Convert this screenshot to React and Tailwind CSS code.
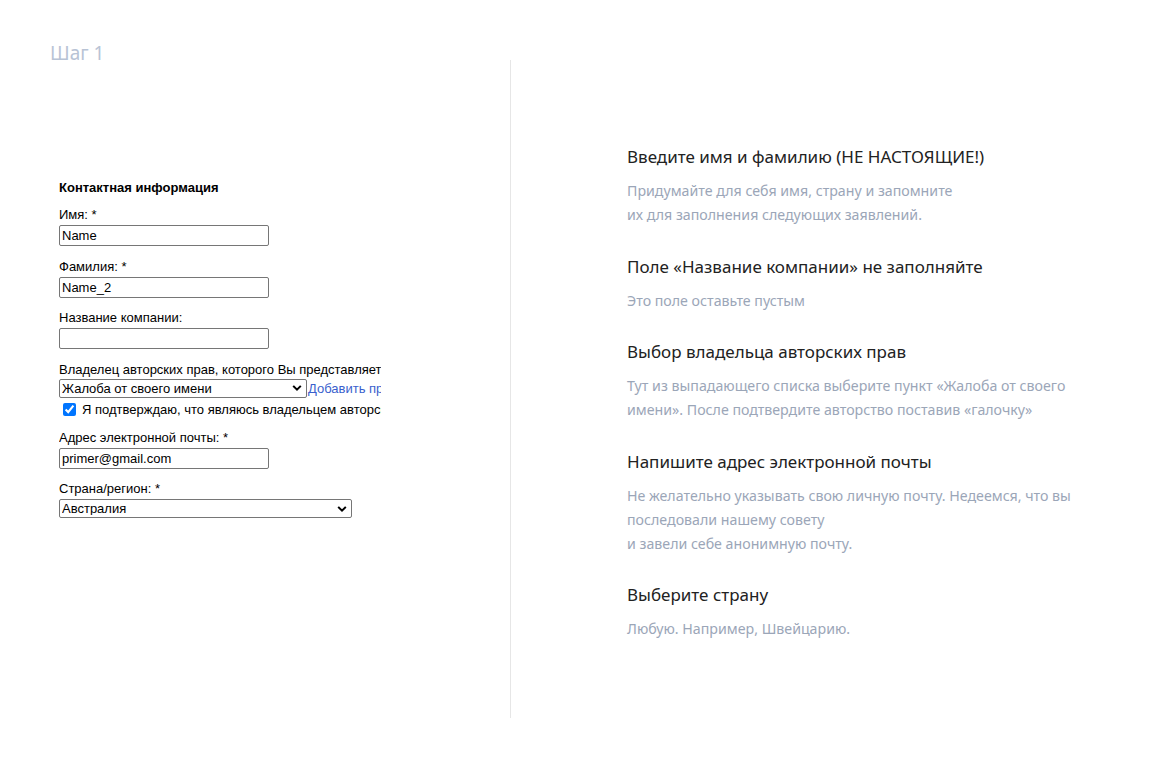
import { useState } from "react"

const TIPS = [
  {
    title: "Введите имя и фамилию (НЕ НАСТОЯЩИЕ!)",
    lines: ["Придумайте для себя имя, страну и запомните", "их для заполнения следующих заявлений."],
  },
  {
    title: "Поле «Название компании» не заполняйте",
    lines: ["Это поле оставьте пустым"],
  },
  {
    title: "Выбор владельца авторских прав",
    lines: [
      "Тут из выпадающего списка выберите пункт «Жалоба от своего",
      "имени». После подтвердите авторство поставив «галочку»",
    ],
  },
  {
    title: "Напишите адрес электронной почты",
    lines: [
      "Не желательно указывать свою личную почту. Недеемся, что вы",
      "последовали нашему совету",
      "и завели себе анонимную почту.",
    ],
  },
  {
    title: "Выберите страну",
    lines: ["Любую. Например, Швейцарию."],
  },
]

function Chevron() {
  return (
    <svg
      width="10"
      height="7"
      viewBox="0 0 10 7"
      className="absolute right-[5px] top-1/2 -translate-y-1/2 pointer-events-none"
      aria-hidden
    >
      <path d="M1.2 1.4 5 5.2 8.8 1.4" fill="none" stroke="#000" strokeWidth="2" />
    </svg>
  )
}

function Field({ label, value, onChange }) {
  return (
    <div className="mb-[12.5px]">
      <div className="leading-[15px] mb-[3px]">{label}</div>
      <input
        type="text"
        value={value}
        onChange={(e) => onChange(e.target.value)}
        className="block w-[210px] h-[21px] px-[2px] border border-[#767676] rounded-[2px] text-[13px] leading-none outline-none"
      />
    </div>
  )
}

function Select({ value, options, width }) {
  return (
    <div className="relative shrink-0" style={{ width }}>
      <select
        defaultValue={value}
        className="block w-full h-[19px] pl-[2px] pr-[18px] border border-[#767676] rounded-[2px] text-[13px] leading-none appearance-none outline-none"
      >
        {options.map((o) => (
          <option key={o}>{o}</option>
        ))}
      </select>
      <Chevron />
    </div>
  )
}

export default function App() {
  const [name, setName] = useState("Name")
  const [surname, setSurname] = useState("Name_2")
  const [company, setCompany] = useState("")
  const [email, setEmail] = useState("primer@gmail.com")

  return (
    <div className="flex min-h-[779px] bg-white">
      {/* Left: step + form */}
      <div className="w-[510px] shrink-0 pl-[50px] pt-[41px]">
        <div className="text-[19px] leading-[24px] text-[#b8c3d5]" style={{ fontFamily: "'Noto Sans', sans-serif" }}>
          Шаг 1
        </div>

        <div
          className="mt-[115px] ml-[9px] w-[322px] overflow-hidden whitespace-nowrap text-[13px] text-black"
          style={{ fontFamily: "'Liberation Sans', Arial, sans-serif" }}
        >
          <div className="font-bold text-[13px] leading-[15px] mb-[12px]">Контактная информация</div>

          <Field label="Имя: *" value={name} onChange={setName} />
          <Field label="Фамилия: *" value={surname} onChange={setSurname} />
          <Field label="Название компании:" value={company} onChange={setCompany} />

          <div className="mb-[12px]">
            <div className="leading-[15px] mb-[2px]">Владелец авторских прав, которого Вы представляете</div>
            <div className="flex items-center">
              <Select value="Жалоба от своего имени" options={["Жалоба от своего имени"]} width={248} />
              <a href="#" className="ml-px text-[#3a5fcd] leading-[15px]">
                Добавить представителя
              </a>
            </div>
            <label className="flex items-center mt-[3px] h-[17px]">
              <input type="checkbox" defaultChecked className="w-[13px] h-[13px] ml-[4px] mr-[6px]" />
              <span className="leading-[15px]">Я подтверждаю, что являюсь владельцем авторских прав</span>
            </label>
          </div>

          <Field label="Адрес электронной почты: *" value={email} onChange={setEmail} />

          <div>
            <div className="leading-[15px] mb-[3px]">Страна/регион: *</div>
            <Select value="Австралия" options={["Австралия", "Швейцария"]} width={293} />
          </div>
        </div>
      </div>

      {/* Divider */}
      <div className="w-px shrink-0 mt-[60px] h-[658px] bg-[#e6e6e6]" />

      {/* Right: tips */}
      <div className="pl-[116px] pt-[143px]" style={{ fontFamily: "'Noto Sans', sans-serif" }}>
        {TIPS.map((tip) => (
          <div key={tip.title} className="mb-[25.5px]">
            <div className="text-[17px] leading-[28px] text-[#222]">{tip.title}</div>
            <div className="mt-[8px] text-[14.2px] leading-[24px] text-[#9ba6b8]">
              {tip.lines.map((l) => (
                <div key={l}>{l}</div>
              ))}
            </div>
          </div>
        ))}
      </div>
    </div>
  )
}
